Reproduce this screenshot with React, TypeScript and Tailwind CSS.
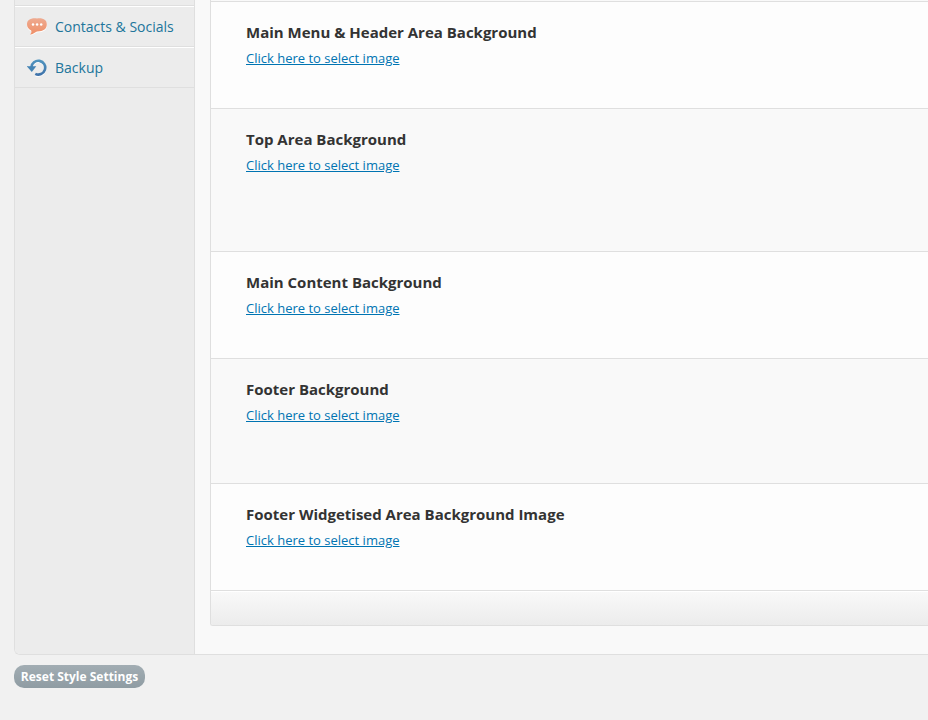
import React from "react";

const sections = [
  { title: "Main Menu & Header Area Background", box: "h-[107px] bg-[#fdfdfd]" },
  { title: "Top Area Background", box: "h-[143px] bg-[#f9f9f9]" },
  { title: "Main Content Background", box: "h-[107px] bg-[#fdfdfd]" },
  { title: "Footer Background", box: "h-[125px] bg-[#f9f9f9]" },
  { title: "Footer Widgetised Area Background Image", box: "h-[107px] bg-[#fdfdfd]" },
];

function ChatIcon() {
  return (
    <svg className="h-5 w-5 shrink-0" viewBox="0 0 20 20">
      <defs>
        <linearGradient id="chat" x1="0" y1="0" x2="0" y2="1">
          <stop offset="0" stopColor="#eeaa90" />
          <stop offset="1" stopColor="#ef8f67" />
        </linearGradient>
      </defs>
      <path d="M10 2.4C17 1.6 20 4.3 20 8.3C20 13 17 15.4 10 15.4C8 15.8 6 18.4 3 18.4C4.5 17 4.6 15.6 4.2 14.4C1.2 13 0 11.2 0 8.3C0 4.3 3 1.6 10 2.4Z" fill="#fff" />
      <path d="M10 1.4C17 .8 19.8 3.3 19.8 7.3C19.8 12 17 14.4 10 14.4C8 14.8 6 17.6 3 17.6C4.5 16 4.6 14.6 4.2 13.4C1.2 12 0 10.2 0 7.3C0 3.3 3 .8 10 1.4Z" fill="url(#chat)" />
      <g fill="#fff">
        <circle cx="6" cy="7.5" r="1.25" />
        <circle cx="10.1" cy="7.5" r="1.25" />
        <circle cx="14.2" cy="7.5" r="1.25" />
      </g>
    </svg>
  );
}

function BackupIcon() {
  return (
    <svg className="h-5 w-5 shrink-0" viewBox="0 0 20 20" fill="none">
      <defs>
        <linearGradient id="backup" gradientUnits="userSpaceOnUse" x1="0" y1="1" x2="0" y2="18">
          <stop offset="0" stopColor="#5096c0" />
          <stop offset="1" stopColor="#3e70a8" />
        </linearGradient>
      </defs>
      <path d="M4.4 10A6.9 6.9 0 1 1 8.3 16.7" stroke="#fff" strokeWidth="2.7" />
      <path d="M4.4 9.3A6.9 6.9 0 1 1 8.3 15.9" stroke="url(#backup)" strokeWidth="2.7" />
      <path d="M-.3 8.2H9.3L4.8 14Z" fill="#4383b4" />
    </svg>
  );
}

export default function App() {
  return (
    <div className="h-[720px] w-[928px] overflow-hidden bg-[#f1f1f1] pl-[14px] font-['Open_Sans',sans-serif]">
      <div className="flex h-[655px] overflow-hidden rounded-bl-[6px] border-b border-l border-[#dfdfdf] bg-[#f9f9f9]">
        <aside className="w-[180px] shrink-0 border-r border-[#dfdfdf] bg-[#ececec] text-sm text-[#21759b]">
          <div className="h-[6px] border-b border-[#dfdfdf]" />
          <a className="flex h-[41px] items-center gap-2 border-y border-b-[#dfdfdf] border-t-white pl-3"><ChatIcon />Contacts &amp; Socials</a>
          <a className="flex h-[41px] items-center gap-2 border-y border-b-[#dfdfdf] border-t-white pl-3"><BackupIcon />Backup</a>
        </aside>
        <main className="ml-[15px] h-[626px] flex-1 overflow-hidden rounded-bl-[3px] border-b border-l border-[#dfdfdf] pt-px">
          {sections.map((s) => (
            <section key={s.title} className={`border-t border-[#dfdfdf] pl-[35px] pt-5 ${s.box}`}>
              <h3 className="text-[15px] font-bold leading-5 text-[#333]">{s.title}</h3>
              <a className="mt-[6px] block text-[13px] leading-5 text-[#0074b2] underline">Click here to select image</a>
            </section>
          ))}
          <div className="h-[35px] border-t border-[#dfdfdf] bg-linear-to-b from-[#f9f9f9] to-[#ececec] shadow-[inset_0_1px_0_#fff]" />
        </main>
      </div>
      <button className="mt-[10px] block h-[23px] w-[131px] rounded-[10px] bg-linear-to-b from-[#a2adb3] to-[#8f9ca3] text-center text-xs font-bold leading-[23px] text-white">Reset Style Settings</button>
    </div>
  );
}
